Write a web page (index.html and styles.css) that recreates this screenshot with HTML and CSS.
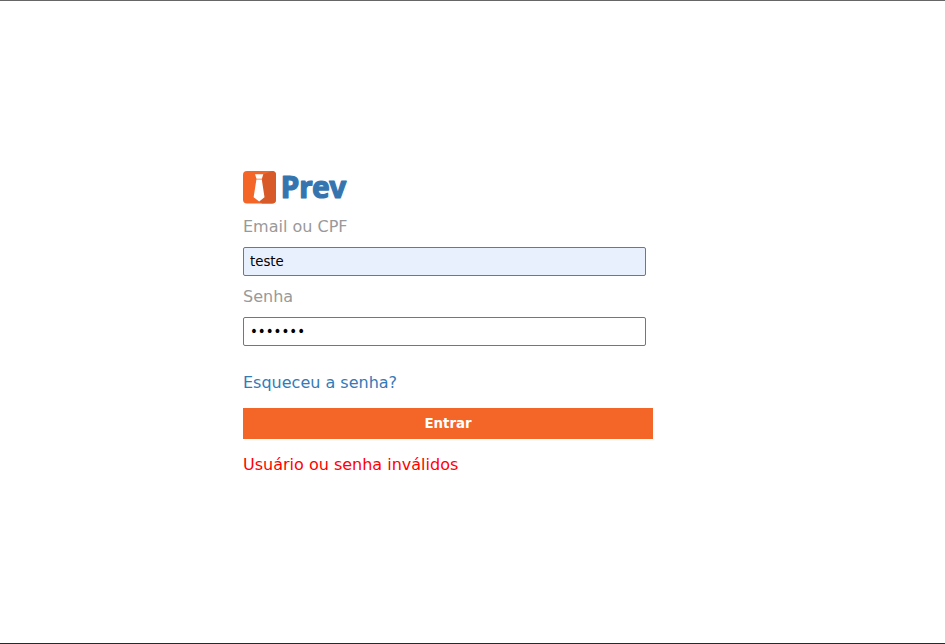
FILE: index.html
```html
<!DOCTYPE html>
<html lang="pt-BR">
<head>
<meta charset="utf-8">
<title>Prev</title>
<link rel="stylesheet" href="styles.css">
</head>
<body>
<main class="page">
  <form class="login">
    <svg class="logo" width="106" height="34" viewBox="0 0 106 34" role="img" aria-label="Prev">
      <rect x="0" y="0" width="33" height="32.500" rx="4" fill="#f46528"/>
      <path d="M20 3.500 L29 0 A4 4 0 0 1 33 4 V28.500 A4 4 0 0 1 29 32.500 H19 L16 30 Z" fill="#d85a29"/>
      <path d="M12 3.300 H20.300 L18.800 7.800 H13.500 Z M13.400 8.600 H18.800 L21.500 26.300 L16.200 30.500 L10.600 26.300 Z" fill="#fff"/>
      <text class="logo-text" x="37.700" y="27" textLength="65.600" lengthAdjust="spacingAndGlyphs">Prev</text>
    </svg>
    <label class="label" for="user">Email ou CPF</label>
    <input class="field filled" id="user" type="text" value="teste">
    <label class="label" for="password">Senha</label>
    <input class="field" id="password" type="password" value="1234567">
    <a class="forgot" href="#">Esqueceu a senha?</a>
    <button class="submit" type="button">Entrar</button>
    <p class="error">Usuário ou senha inválidos</p>
  </form>
</main>
</body>
</html>
```
FILE: styles.css
```css
* { box-sizing: border-box; }
body {
  margin: 0;
  background: #fff;
  font: 16px/19px "DejaVu Sans", sans-serif;
}
.page {
  height: 644px;
  padding: 170px 0 0 243px;
  border-top: 1px solid #666;
  border-bottom: 1px solid #2a282a;
}
.login {
  display: flex;
  flex-direction: column;
  align-items: flex-start;
  width: 410px;
}
.logo { display: block; overflow: visible; margin-bottom: 12px; }
.logo-text {
  font: 700 30px "Noto Sans", sans-serif;
  fill: #3575af;
  stroke: #3575af;
  stroke-width: 1.2;
  stroke-linejoin: round;
}
.label { color: #999; margin-bottom: 11px; }
.field {
  width: 403px;
  height: 29px;
  margin: 0 0 11px;
  padding: 1px 6px;
  border: 1px solid #767676;
  border-radius: 2px;
  background: #fff;
  color: #000;
  font: 13.333px "DejaVu Sans", sans-serif;
}
.filled { background: #e8f0fe; }
.forgot { margin: 16px 0; color: #337ab7; text-decoration: none; }
.submit {
  width: 410px;
  height: 31px;
  padding: 0;
  border: 0;
  background: #f46528;
  color: #fff;
  font: bold 13.333px "DejaVu Sans", sans-serif;
}
.error { margin: 16px 0 0; color: #f00; }
```
